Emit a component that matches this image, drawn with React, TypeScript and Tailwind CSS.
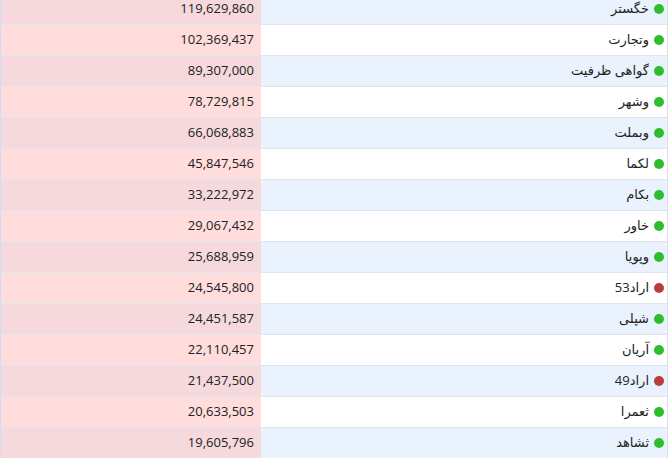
const rows = [
  { name: "خگستر", value: "119,629,860", up: true },
  { name: "وتجارت", value: "102,369,437", up: true },
  { name: "گواهی ظرفیت", value: "89,307,000", up: true },
  { name: "وشهر", value: "78,729,815", up: true },
  { name: "وبملت", value: "66,068,883", up: true },
  { name: "لکما", value: "45,847,546", up: true },
  { name: "بکام", value: "33,222,972", up: true },
  { name: "خاور", value: "29,067,432", up: true },
  { name: "وپویا", value: "25,688,959", up: true },
  { name: "اراد53", value: "24,545,800", up: false },
  { name: "شپلی", value: "24,451,587", up: true },
  { name: "آریان", value: "22,110,457", up: true },
  { name: "اراد49", value: "21,437,500", up: false },
  { name: "ثعمرا", value: "20,633,503", up: true },
  { name: "ثشاهد", value: "19,605,796", up: true },
];

export default function App() {
  return (
    <div
      className="h-[458px] w-[670px] overflow-hidden bg-white text-[13px] text-[#222]"
      style={{ fontFamily: '"Open Sans", "DejaVu Sans", sans-serif' }}
    >
      <div className="mt-[-6px] mr-[2px] border-l border-r border-l-[#d6dbf3] border-r-[#dde2ea]">
        {rows.map((row, i) => {
          const shaded = i % 2 === 0;
          return (
            <div
              key={row.name}
              className={`flex h-[31px] border-b border-[#e1e6ee] ${
                shaded ? "bg-[#eaf2fd]" : "bg-white"
              }`}
            >
              <div
                className={`flex w-[260px] shrink-0 items-center justify-end pr-[7px] ${
                  shaded ? "bg-[#f5d9dd]" : "bg-[#ffdddd]"
                }`}
              >
                {row.value}
              </div>
              <div
                dir="rtl"
                className="flex flex-1 items-center gap-[5px] pr-[3px]"
              >
                <span
                  className={`h-[10px] w-[10px] rounded-full ${
                    row.up ? "bg-[#2dbe2d]" : "bg-[#b83c3c]"
                  }`}
                />
                <span>{row.name}</span>
              </div>
            </div>
          );
        })}
      </div>
    </div>
  );
}
